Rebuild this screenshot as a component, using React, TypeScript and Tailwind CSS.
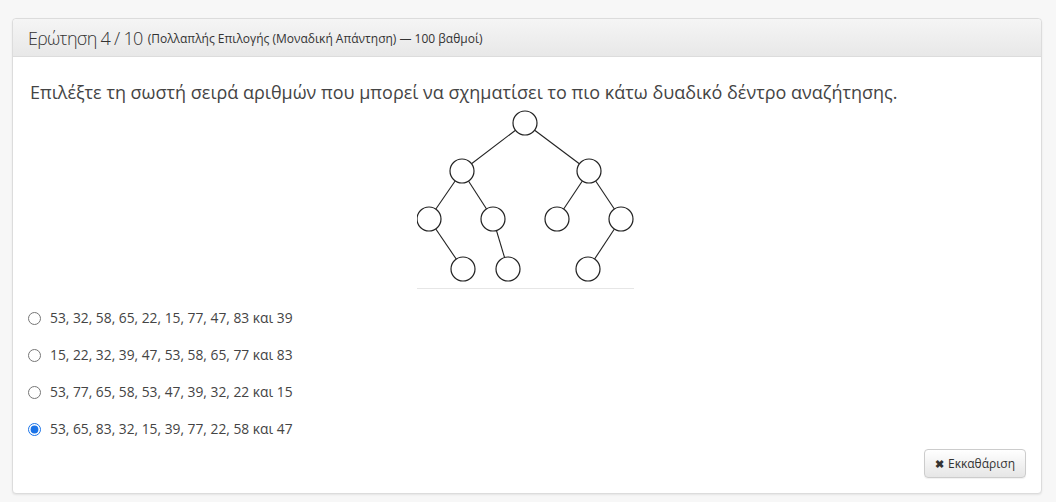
import { useState } from "react";

const options = [
  "53, 32, 58, 65, 22, 15, 77, 47, 83 και 39",
  "15, 22, 32, 39, 47, 53, 58, 65, 77 και 83",
  "53, 77, 65, 58, 53, 47, 39, 32, 22 και 15",
  "53, 65, 83, 32, 15, 39, 77, 22, 58 και 47",
];

// node centres inside the 217x180 tree picture
const nodes: [number, number][] = [
  [108, 13],
  [45, 61],
  [172, 61],
  [12, 109],
  [76, 109],
  [140, 109],
  [204, 109],
  [46, 159],
  [91, 159],
  [171, 159],
];

const edges: [number, number][] = [
  [0, 1],
  [0, 2],
  [1, 3],
  [1, 4],
  [2, 5],
  [2, 6],
  [3, 7],
  [4, 8],
  [6, 9],
];

function Tree() {
  return (
    <svg width="217" height="180" viewBox="0 0 217 180" className="block">
      {edges.map(([a, b]) => (
        <line
          key={`${a}-${b}`}
          x1={nodes[a][0]}
          y1={nodes[a][1]}
          x2={nodes[b][0]}
          y2={nodes[b][1]}
          stroke="#222"
          strokeWidth="1.1"
        />
      ))}
      {nodes.map(([x, y], i) => (
        <circle key={i} cx={x} cy={y} r="12" fill="white" stroke="#222" strokeWidth="1.2" />
      ))}
      <line x1="0" y1="178.5" x2="217" y2="178.5" stroke="#e6e6e6" strokeWidth="1" />
    </svg>
  );
}

export default function App() {
  const [selected, setSelected] = useState<number | null>(3);

  return (
    <div className="min-h-[502px] bg-[#f7f7f7] pt-[18px] px-[12px] pb-[8px] font-['Open_Sans',sans-serif] text-[#333]">
      <div className="w-[1030px] bg-white border border-[#dcdcdc] rounded-[4px] shadow-[0_1px_2px_rgba(0,0,0,0.08)]">
        <div className="h-[38px] flex items-center px-[15px] border-b border-[#dcdcdc] rounded-t-[4px] bg-gradient-to-b from-[#f5f5f5] to-[#e8e8e8]">
          <span className="text-[18px] font-light leading-none tracking-[-0.7px] text-[#333]">Ερώτηση 4 / 10</span>
          <span className="text-[12px] ml-[5px] mt-[3px] text-[#333]">
            (Πολλαπλής Επιλογής (Μοναδική Απάντηση) — 100 βαθμοί)
          </span>
        </div>

        <div className="px-[17px] pt-[22px] pb-[15px]">
          <p className="text-[18px] leading-[26px] text-[#444]">
            Επιλέξτε τη σωστή σειρά αριθμών που μπορεί να σχηματίσει το πιο κάτω δυαδικό δέντρο αναζήτησης.
          </p>

          <div className="flex justify-center mt-[5px] mr-[3px]">
            <Tree />
          </div>

          <div className="flex flex-col gap-[18px] mt-[19px] -ml-[2px]">
            {options.map((opt, i) => (
              <label key={i} className="flex items-center gap-[9px] h-[19px] text-[13.8px] text-[#444] cursor-pointer">
                <input
                  type="radio"
                  name="answer"
                  checked={selected === i}
                  onChange={() => setSelected(i)}
                  className="w-[13px] h-[13px] m-0 accent-[#1a73e8]"
                />
                <span>{opt}</span>
              </label>
            ))}
          </div>

          <div className="flex justify-end mt-[10px] -mr-[2px]">
            <button
              onClick={() => setSelected(null)}
              className="flex items-center gap-[4px] h-[29px] px-[10px] text-[12px] text-[#333] border border-[#ccc] rounded-[4px] bg-gradient-to-b from-white to-[#e6e6e6] shadow-[0_1px_1px_rgba(0,0,0,0.06)]"
            >
              <span className="text-[11px] font-bold leading-none">✖</span>
              <span>Εκκαθάριση</span>
            </button>
          </div>
        </div>
      </div>
    </div>
  );
}
